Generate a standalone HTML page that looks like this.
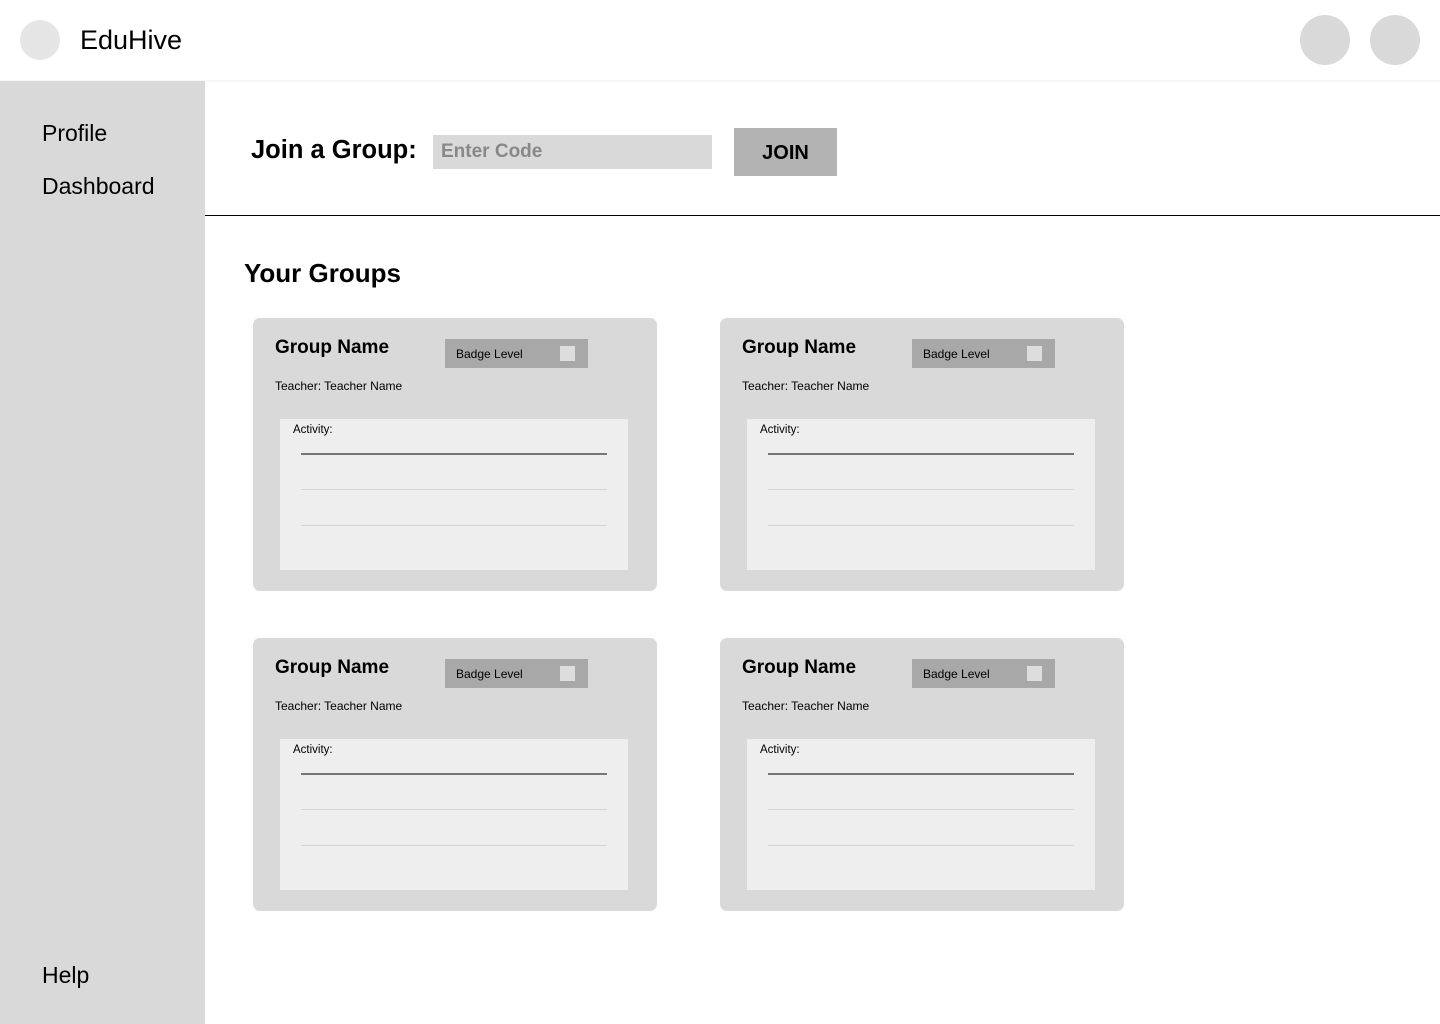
<!DOCTYPE html><html><head><style>
*{margin:0;padding:0;box-sizing:border-box}
body{width:1440px;height:1024px;position:relative;background:#fff;font-family:"Liberation Sans",Arial,sans-serif;color:#000;overflow:hidden}
.a{position:absolute}
.t{position:absolute;white-space:nowrap;line-height:1}
.card{position:absolute;width:404px;height:273px;background:#d9d9d9;border-radius:7px}
.card .gn{position:absolute;left:22px;top:20px;font-size:19px;font-weight:bold;line-height:1}
.card .badge{position:absolute;left:192px;top:21px;width:143px;height:29px;background:#a8a8a8}
.card .badge span{position:absolute;left:11px;top:9px;font-size:12px;line-height:1}
.card .badge i{position:absolute;left:115px;top:7px;width:15px;height:15px;background:#ddd}
.card .tn{position:absolute;left:22px;top:62px;font-size:12px;line-height:1}
.card .box{position:absolute;left:27px;top:101px;width:348px;height:151px;background:#eee}
.card .box span{position:absolute;left:13px;top:6px;font-size:11.5px;line-height:1}
.card .l{position:absolute;left:21px;width:306px}
</style></head><body>
<div class="a" style="left:0;top:0;width:1440px;height:80px;background:#fff;box-shadow:0 1px 2px rgba(0,0,0,0.06)"></div>
<div class="a" style="left:20px;top:20px;width:40px;height:40px;border-radius:50%;background:#e5e5e5"></div>
<div class="t" style="left:80px;top:27px;font-size:27px">EduHive</div>
<div class="a" style="left:1300px;top:15px;width:50px;height:50px;border-radius:50%;background:#d9d9d9"></div>
<div class="a" style="left:1370px;top:15px;width:50px;height:50px;border-radius:50%;background:#d9d9d9"></div>
<div class="a" style="left:0;top:81px;width:205px;height:943px;background:#d9d9d9"></div>
<div class="t" style="left:42px;top:122px;font-size:23px">Profile</div>
<div class="t" style="left:42px;top:175px;font-size:23px">Dashboard</div>
<div class="t" style="left:42px;top:964px;font-size:23px">Help</div>
<div class="t" style="left:251px;top:138px;font-size:25.5px;font-weight:bold">Join a Group:</div>
<div class="a" style="left:433px;top:135px;width:279px;height:34px;background:#d9d9d9"></div>
<div class="t" style="left:441px;top:142px;font-size:19px;color:#888;font-weight:bold">Enter Code</div>
<div class="a" style="left:734px;top:128px;width:103px;height:48px;background:#b3b3b3"></div>
<div class="t" style="left:734px;top:143px;width:103px;text-align:center;font-size:20px;font-weight:bold">JOIN</div>
<div class="a" style="left:205px;top:215px;width:1235px;height:1px;background:#000"></div>
<div class="t" style="left:244px;top:260px;font-size:26px;font-weight:bold">Your Groups</div>

<div class="card" style="left:253px;top:318px"><div class="gn">Group Name</div><div class="badge"><span>Badge Level</span><i></i></div><div class="tn">Teacher: Teacher Name</div><div class="box"><span>Activity:</span><div class="l" style="top:34px;height:2px;background:#777"></div><div class="l" style="top:70px;height:1px;background:#d6d6d6"></div><div class="l" style="top:106px;height:1px;background:#d6d6d6"></div></div></div>
<div class="card" style="left:720px;top:318px"><div class="gn">Group Name</div><div class="badge"><span>Badge Level</span><i></i></div><div class="tn">Teacher: Teacher Name</div><div class="box"><span>Activity:</span><div class="l" style="top:34px;height:2px;background:#777"></div><div class="l" style="top:70px;height:1px;background:#d6d6d6"></div><div class="l" style="top:106px;height:1px;background:#d6d6d6"></div></div></div>
<div class="card" style="left:253px;top:638px"><div class="gn">Group Name</div><div class="badge"><span>Badge Level</span><i></i></div><div class="tn">Teacher: Teacher Name</div><div class="box"><span>Activity:</span><div class="l" style="top:34px;height:2px;background:#777"></div><div class="l" style="top:70px;height:1px;background:#d6d6d6"></div><div class="l" style="top:106px;height:1px;background:#d6d6d6"></div></div></div>
<div class="card" style="left:720px;top:638px"><div class="gn">Group Name</div><div class="badge"><span>Badge Level</span><i></i></div><div class="tn">Teacher: Teacher Name</div><div class="box"><span>Activity:</span><div class="l" style="top:34px;height:2px;background:#777"></div><div class="l" style="top:70px;height:1px;background:#d6d6d6"></div><div class="l" style="top:106px;height:1px;background:#d6d6d6"></div></div></div>
</body></html>
